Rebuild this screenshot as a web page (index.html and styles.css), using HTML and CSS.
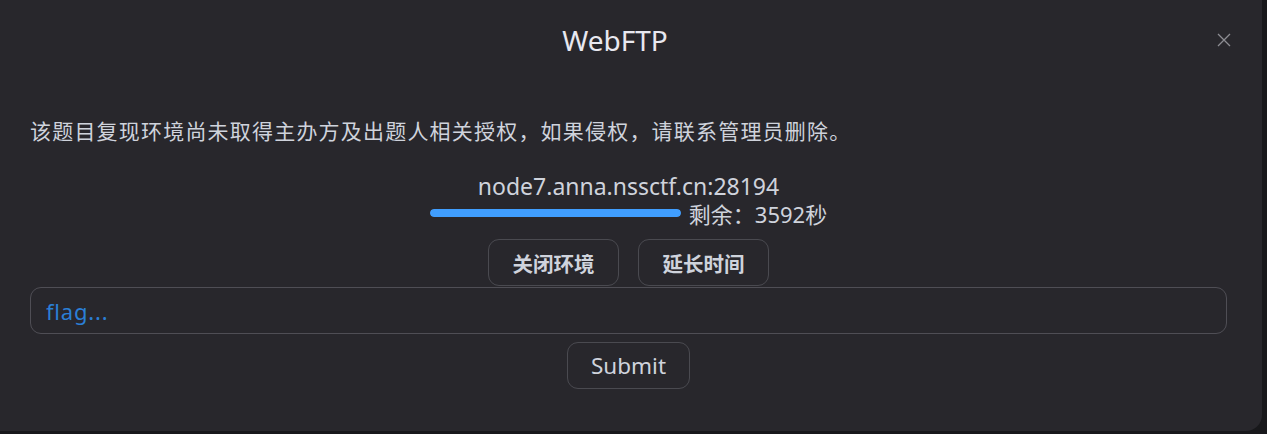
FILE: index.html
```html
<!DOCTYPE html>
<html lang="zh-CN">
<head>
<meta charset="utf-8">
<title>WebFTP</title>
<link rel="stylesheet" href="styles.css">
</head>
<body>
<div class="dialog">
  <header class="dialog-header">
    <h2 class="dialog-title">WebFTP</h2>
    <button class="close" aria-label="关闭">
      <svg width="16" height="16" viewBox="0 0 16 16"><path d="M2 2 L14 14 M14 2 L2 14" stroke="#8d8d93" stroke-width="1.3" fill="none"/></svg>
    </button>
  </header>
  <div class="dialog-body">
    <p class="notice">该题目复现环境尚未取得主办方及出题人相关授权，如果侵权，请联系管理员删除。</p>
    <div class="env">
      <div class="host">node7.anna.nssctf.cn:28194</div>
      <div class="progress-row">
        <div class="bar"><div class="bar-fill" style="width:100%"></div></div>
        <span class="remain">剩余：3592秒</span>
      </div>
      <div class="actions">
        <button class="btn">关闭环境</button>
        <button class="btn">延长时间</button>
      </div>
    </div>
    <div class="flag-box">
      <input class="flag-input" type="text" placeholder="flag...">
    </div>
    <div class="submit-row">
      <button class="btn btn-submit">Submit</button>
    </div>
  </div>
</div>
</body>
</html>
```
FILE: styles.css
```css
* { box-sizing: border-box; }
html, body {
  margin: 0;
  padding: 0;
  width: 1267px;
  height: 434px;
  overflow: hidden;
  background: #18181b;
}
body {
  font-family: "Noto Sans", "Noto Sans CJK SC", sans-serif;
  color: #cfd3dc;
}
.dialog {
  width: 1262px;
  height: 431px;
  background: #28272c;
  border-radius: 0 0 16px 0;
  display: flex;
  flex-direction: column;
}
.dialog-header {
  height: 86px;
  display: flex;
  align-items: center;
  justify-content: center;
  position: relative;
  padding-right: 32px;
  padding-bottom: 6px;
}
.dialog-title {
  margin: 0;
  font-size: 28px;
  font-weight: 400;
  color: #e8e8f0;
}
.close {
  position: absolute;
  right: 30px;
  top: 32px;
  background: none;
  border: 0;
  padding: 0;
  width: 16px;
  height: 16px;
  display: flex;
}
.dialog-body {
  padding: 22px 35px 0 30px;
  display: flex;
  flex-direction: column;
}
.notice {
  margin: 0;
  font-family: "Noto Sans CJK SC", sans-serif;
  font-size: 21px;
  letter-spacing: 1.2px;
  line-height: 44px;
}
.env {
  display: flex;
  flex-direction: column;
  align-items: center;
  margin-top: 21px;
}
.host {
  font-size: 23px;
  line-height: 26px;
}
.progress-row {
  display: flex;
  align-items: center;
  gap: 8px;
  height: 28px;
}
.bar {
  width: 251px;
  height: 8px;
  border-radius: 4px;
  background: #3a3a40;
  overflow: hidden;
}
.bar-fill {
  height: 100%;
  background: #409eff;
  border-radius: 4px;
}
.remain {
  font-size: 22px;
}
.actions {
  display: flex;
  gap: 19px;
  margin-top: 12px;
}
.btn {
  height: 47px;
  background: transparent;
  border: 1px solid #4a4a50;
  border-radius: 11px;
  color: #cfd3dc;
  font-family: "Noto Sans CJK SC", sans-serif;
  font-size: 20.5px;
  font-weight: 700;
  padding: 0;
  width: 131px;
}
.flag-box {
  margin-top: 1px;
}
.flag-input {
  width: 100%;
  height: 47px;
  background: transparent;
  border: 1px solid #4f4e55;
  border-radius: 11px;
  padding: 0 15px;
  font-family: "Noto Sans", sans-serif;
  font-size: 22px;
  letter-spacing: 0.8px;
  color: #cfd3dc;
  outline: none;
}
.flag-input::placeholder {
  color: #2b7fd6;
}
.submit-row {
  display: flex;
  justify-content: center;
  margin-top: 8px;
}
.btn-submit {
  width: 123px;
  font-family: "Noto Sans", sans-serif;
  font-weight: 400;
  font-size: 22.5px;
  padding: 0;
}
```
